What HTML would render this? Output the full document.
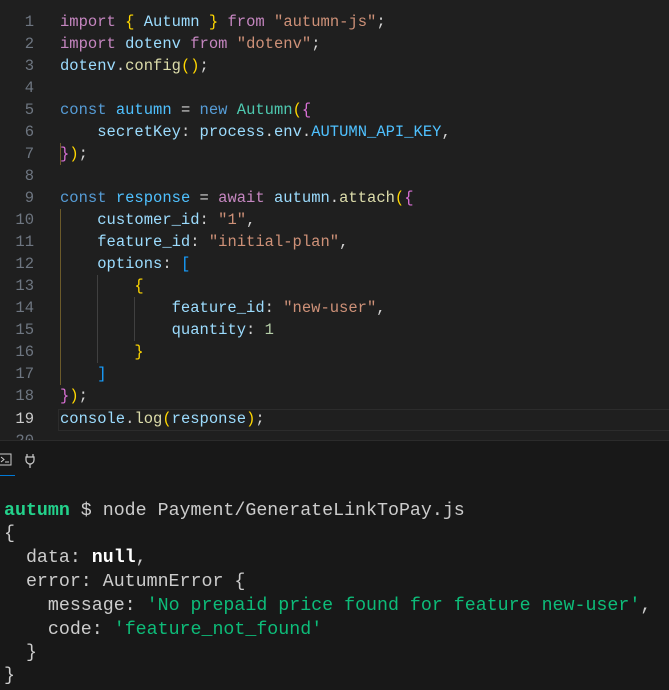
<!DOCTYPE html>
<html><head><style>
body{margin:0;width:669px;height:689px;overflow:hidden;background:#1f1f1f;font-family:"Liberation Mono",monospace;}
.ed{position:absolute;left:0;top:0;width:669px;height:440px;background:#1f1f1f;overflow:hidden}
.ln{position:absolute;left:0;width:34px;text-align:right;color:#6e7681;font-size:15.5px;}
.cd{position:absolute;left:60px;white-space:pre;font-size:15.5px;color:#d4d4d4;}
.row{position:absolute;left:0;height:22px;line-height:22px;width:669px}
.k{color:#c586c0}.v{color:#9cdcfe}.f{color:#dcdcaa}.s{color:#ce9178}.c{color:#4ec9b0}.b{color:#569cd6}.n{color:#b5cea8}.cn{color:#4fc1ff}
.y{color:#ffd700}.p{color:#da70d6}.u{color:#179fff}
.g{position:absolute;width:1px;background:#404040}
.term{position:absolute;left:0;top:440px;width:669px;height:249px;background:#181818;border-top:1px solid #2b2b2b}
.t{position:absolute;left:4px;white-space:pre;font-size:18.3px;color:#cccccc;line-height:23px}
.gr{color:#23d18b;font-weight:bold}.st{color:#0dbc79}
</style></head><body>
<div class="ed">
<div style="position:absolute;left:58px;top:409px;width:611px;height:20px;border:1px solid #2c2c2c"></div>
<div class="g" style="left:60px;top:143px;height:22px;background:#6b5a2a"></div>
<div class="g" style="left:60px;top:209px;height:176px;background:#6b5a2a"></div>
<div class="g" style="left:97px;top:275px;height:88px;background:#404040"></div>
<div class="g" style="left:134px;top:297px;height:44px;background:#404040"></div>
<div class="row" style="top:11px"><span class="ln">1</span><span class="cd"><span class="k">import</span> <span class="y">{</span> <span class="v">Autumn</span> <span class="y">}</span> <span class="k">from</span> <span class="s">"autumn-js"</span>;</span></div>
<div class="row" style="top:33px"><span class="ln">2</span><span class="cd"><span class="k">import</span> <span class="v">dotenv</span> <span class="k">from</span> <span class="s">"dotenv"</span>;</span></div>
<div class="row" style="top:55px"><span class="ln">3</span><span class="cd"><span class="v">dotenv</span>.<span class="f">config</span><span class="y">()</span>;</span></div>
<div class="row" style="top:77px"><span class="ln">4</span></div>
<div class="row" style="top:99px"><span class="ln">5</span><span class="cd"><span class="b">const</span> <span class="cn">autumn</span> = <span class="b">new</span> <span class="c">Autumn</span><span class="y">(</span><span class="p">{</span></span></div>
<div class="row" style="top:121px"><span class="ln">6</span><span class="cd">    <span class="v">secretKey</span>: <span class="v">process</span>.<span class="v">env</span>.<span class="cn">AUTUMN_API_KEY</span>,</span></div>
<div class="row" style="top:143px"><span class="ln">7</span><span class="cd"><span class="p">}</span><span class="y">)</span>;</span></div>
<div class="row" style="top:165px"><span class="ln">8</span></div>
<div class="row" style="top:187px"><span class="ln">9</span><span class="cd"><span class="b">const</span> <span class="cn">response</span> = <span class="k">await</span> <span class="v">autumn</span>.<span class="f">attach</span><span class="y">(</span><span class="p">{</span></span></div>
<div class="row" style="top:209px"><span class="ln">10</span><span class="cd">    <span class="v">customer_id</span>: <span class="s">"1"</span>,</span></div>
<div class="row" style="top:231px"><span class="ln">11</span><span class="cd">    <span class="v">feature_id</span>: <span class="s">"initial-plan"</span>,</span></div>
<div class="row" style="top:253px"><span class="ln">12</span><span class="cd">    <span class="v">options</span>: <span class="u">[</span></span></div>
<div class="row" style="top:275px"><span class="ln">13</span><span class="cd">        <span class="y">{</span></span></div>
<div class="row" style="top:297px"><span class="ln">14</span><span class="cd">            <span class="v">feature_id</span>: <span class="s">"new-user"</span>,</span></div>
<div class="row" style="top:319px"><span class="ln">15</span><span class="cd">            <span class="v">quantity</span>: <span class="n">1</span></span></div>
<div class="row" style="top:341px"><span class="ln">16</span><span class="cd">        <span class="y">}</span></span></div>
<div class="row" style="top:363px"><span class="ln">17</span><span class="cd">    <span class="u">]</span></span></div>
<div class="row" style="top:385px"><span class="ln">18</span><span class="cd"><span class="p">}</span><span class="y">)</span>;</span></div>
<div class="row" style="top:408px"><span class="ln" style="color:#cccccc">19</span><span class="cd"><span class="v">console</span>.<span class="f">log</span><span class="y">(</span><span class="v">response</span><span class="y">)</span>;</span></div>
<div class="row" style="top:430px"><span class="ln">20</span></div>
</div>
<div class="term">
<svg style="position:absolute;left:0;top:10px" width="40" height="22" viewBox="0 0 40 22">
<rect x="-1" y="3" width="12" height="11" fill="none" stroke="#cccccc" stroke-width="1"/>
<path d="M1 6l3 2.5-3 2.5M5 11h4" stroke="#cccccc" fill="none"/>
<path d="M27 3v3M33 3v3M26 6h8v3a4 4 0 0 1-8 0zM30 13v4" stroke="#cccccc" fill="none" stroke-width="1.2"/>
</svg>
<div style="position:absolute;left:0;top:34px;width:15px;height:1px;background:#0078d4"></div>
<div class="t" style="top:59px"><span class="gr">autumn</span> $ node Payment/GenerateLinkToPay.js</div>
<div class="t" style="top:82px">{</div>
<div class="t" style="top:106px">  data: <b style="color:#fff">null</b>,</div>
<div class="t" style="top:130px">  error: AutumnError {</div>
<div class="t" style="top:154px">    message: <span class="st">'No prepaid price found for feature new-user'</span>,</div>
<div class="t" style="top:178px">    code: <span class="st">'feature_not_found'</span></div>
<div class="t" style="top:201px">  }</div>
<div class="t" style="top:224px">}</div>
</div>
</body></html>
